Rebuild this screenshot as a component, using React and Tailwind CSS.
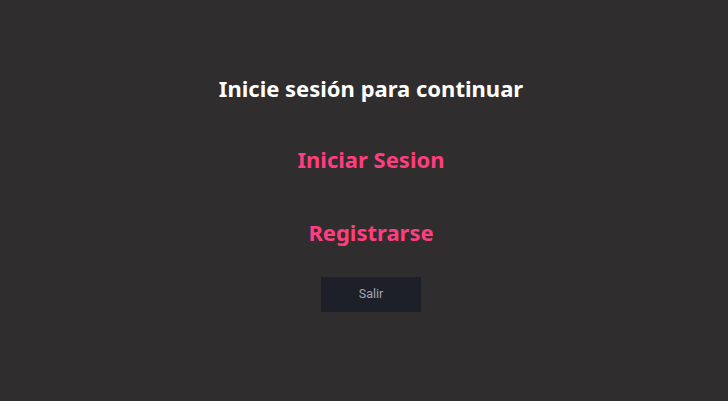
export default function App() {
  return (
    <div className="min-h-screen w-full bg-[#2f2d2e] flex flex-col items-center pt-[73px] pl-[14px]" style={{ fontFamily: '"Noto Sans", "Open Sans", sans-serif' }}>
      <h1 className="text-[22px] font-bold text-white leading-[30px]">Inicie sesión para continuar</h1>
      <a className="mt-[41px] text-[22px] font-bold text-[#ff3d7f] leading-[30px]">Iniciar Sesion</a>
      <a className="mt-[43px] text-[22px] font-bold text-[#ff3d7f] leading-[30px]">Registrarse</a>
      <button className="mt-[30px] w-[100px] h-[35px] bg-[#1d2029] text-[#a3a6b1] text-[12.5px]" style={{ fontFamily: 'Roboto, Arial, sans-serif' }}>
        Salir
      </button>
    </div>
  );
}
